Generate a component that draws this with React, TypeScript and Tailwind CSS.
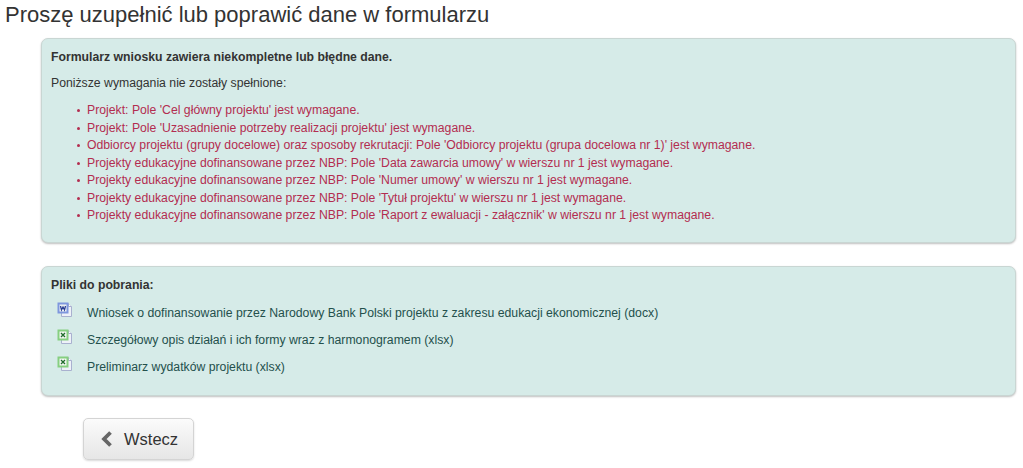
const errors = [
  "Projekt: Pole 'Cel główny projektu' jest wymagane.",
  "Projekt: Pole 'Uzasadnienie potrzeby realizacji projektu' jest wymagane.",
  "Odbiorcy projektu (grupy docelowe) oraz sposoby rekrutacji: Pole 'Odbiorcy projektu (grupa docelowa nr 1)' jest wymagane.",
  "Projekty edukacyjne dofinansowane przez NBP: Pole 'Data zawarcia umowy' w wierszu nr 1 jest wymagane.",
  "Projekty edukacyjne dofinansowane przez NBP: Pole 'Numer umowy' w wierszu nr 1 jest wymagane.",
  "Projekty edukacyjne dofinansowane przez NBP: Pole 'Tytuł projektu' w wierszu nr 1 jest wymagane.",
  "Projekty edukacyjne dofinansowane przez NBP: Pole 'Raport z ewaluacji - załącznik' w wierszu nr 1 jest wymagane.",
];

const files = [
  { name: 'Wniosek o dofinansowanie przez Narodowy Bank Polski projektu z zakresu edukacji ekonomicznej (docx)', kind: 'word' },
  { name: 'Szczegółowy opis działań i ich formy wraz z harmonogramem (xlsx)', kind: 'excel' },
  { name: 'Preliminarz wydatków projektu (xlsx)', kind: 'excel' },
];

function FileIcon({ kind }: { kind: string }) {
  const word = kind === 'word';
  return (
    <svg width="16" height="16" viewBox="0 0 16 16" className="shrink-0">
      <path d="M4.5 1.5h7l3 3v10h-10z" fill="#eef1f8" stroke="#a9b1cf" />
      <path d="M11.5 1.5v3h3" fill="#ffffff" stroke="#a9b1cf" />
      <rect x="0.5" y="0.5" width="11" height="11" fill={word ? '#7f97de' : '#86cf80'} />
      <rect x="2.5" y="2.5" width="7" height="7" fill="#f4f7f4" />
      <path d={word ? 'M3.5 4l1 4 1.5-3 1.5 3 1-4' : 'M4 4l4 4M8 4l-4 4'} fill="none" stroke={word ? '#2b3f94' : '#1f6b2c'} strokeWidth="1.3" />
    </svg>
  );
}

function App() {
  return (
    <div className="h-[468px] w-[1023px] overflow-hidden bg-white font-['Liberation_Sans',Arial,sans-serif] text-[12.24px] text-[#333333]">
      <h1 className="pl-[5px] pt-[3px] text-[22px] leading-[24px] text-[#333333]">Proszę uzupełnić lub poprawić dane w formularzu</h1>

      <div className="ml-[41px] mr-[7px] mt-[11px] h-[205px] rounded-[7px] border border-[#c9d6d3] bg-[#d6ebe8] pl-[9px] pr-[9px] pt-[10px] shadow-[0_1px_2px_rgba(0,0,0,0.25)]">
        <p className="font-bold leading-[17px]">Formularz wniosku zawiera niekompletne lub błędne dane.</p>
        <p className="mt-[9px] leading-[17px]">Poniższe wymagania nie zostały spełnione:</p>
        <ul className="mt-[10px] pl-[26px] leading-[17.5px] text-[#b32d50]">
          {errors.map((error) => (
            <li key={error} className="flex items-center">
              <span className="mr-[7px] h-[3px] w-[3px] shrink-0 rounded-full bg-[#b32d50]" />
              {error}
            </li>
          ))}
        </ul>
      </div>

      <div className="ml-[41px] mr-[7px] mt-[23px] h-[130px] rounded-[7px] border border-[#c9d6d3] bg-[#d6ebe8] pl-[9px] pr-[9px] pt-[10px] shadow-[0_1px_2px_rgba(0,0,0,0.25)]">
        <p className="font-bold leading-[17px]">Pliki do pobrania:</p>
        <div className="mt-[8px] flex flex-col gap-[11px]">
          {files.map((file) => (
            <div key={file.name} className="flex h-[16px] items-center gap-[14px] pl-[6px] text-[#24504c]">
              <FileIcon kind={file.kind} />
              <span className="relative top-[3px]">{file.name}</span>
            </div>
          ))}
        </div>
      </div>

      <button className="ml-[83px] mt-[22px] flex h-[42px] w-[111px] items-center gap-[11px] rounded-[5px] border border-[#d4d4d4] bg-gradient-to-b from-[#fbfbfb] to-[#e6e6e6] pl-[16px] text-[16.5px] text-[#333333] shadow-[0_1px_2px_rgba(0,0,0,0.15)]">
        <svg width="13" height="16" viewBox="0 0 13 16">
          <path d="M10.5 1.5L4 8l6.5 6.5" fill="none" stroke="#666666" strokeWidth="3.8" />
        </svg>
        Wstecz
      </button>
    </div>
  );
}

export default App;
